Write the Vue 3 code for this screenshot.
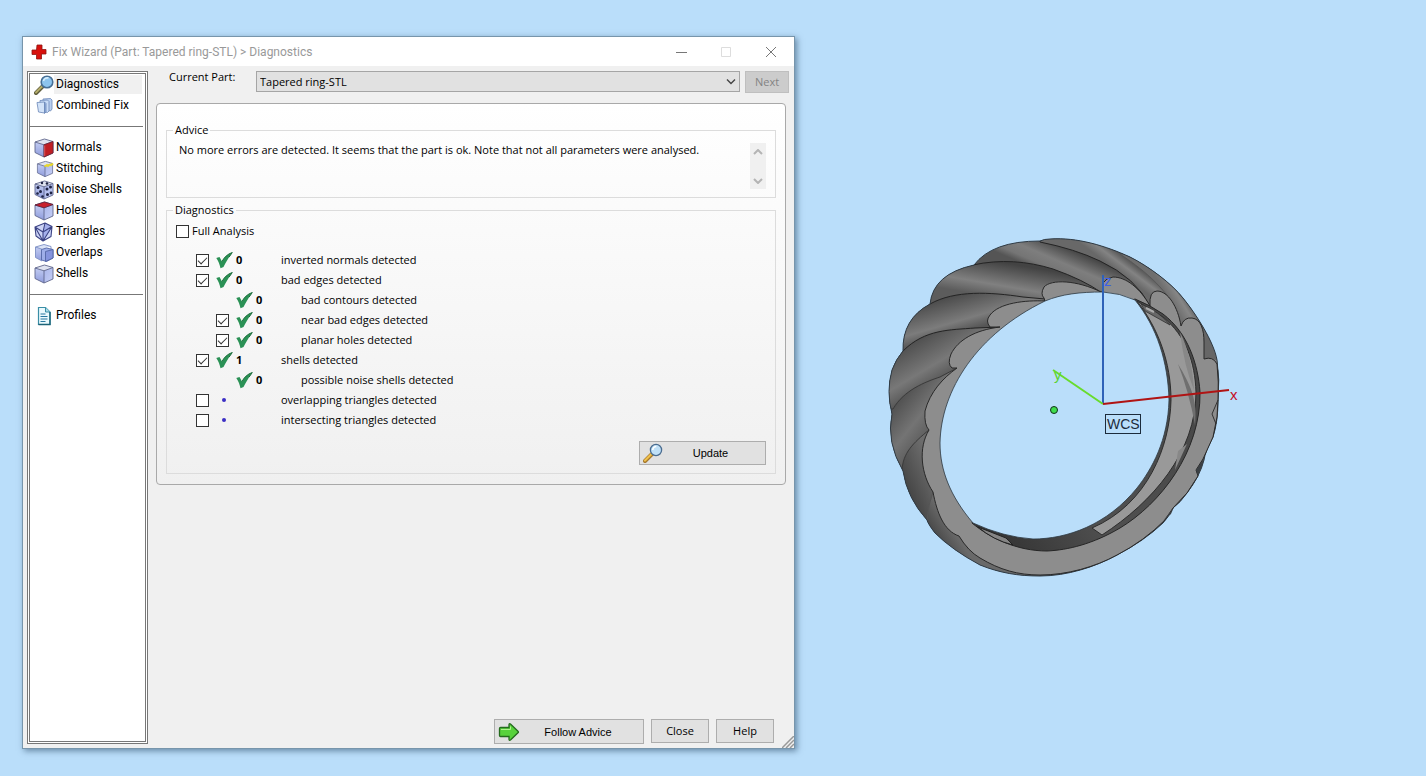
<script setup>
import { ref } from 'vue'

const groups = [
  [
    { name: 'Diagnostics', icon: 'lens' },
    { name: 'Combined Fix', icon: 'stack' }
  ],
  [
    { name: 'Normals', icon: 'normals' },
    { name: 'Stitching', icon: 'stitching' },
    { name: 'Noise Shells', icon: 'noise' },
    { name: 'Holes', icon: 'holes' },
    { name: 'Triangles', icon: 'triangles' },
    { name: 'Overlaps', icon: 'overlaps' },
    { name: 'Shells', icon: 'cube' }
  ],
  [{ name: 'Profiles', icon: 'page' }]
]
const active = ref('Diagnostics')
const full = ref(false)

const checks = ref([
  { text: 'inverted normals detected', count: 0, box: true, on: true, ok: true },
  { text: 'bad edges detected', count: 0, box: true, on: true, ok: true },
  { text: 'bad contours detected', count: 0, box: false, ok: true, nested: true },
  { text: 'near bad edges detected', count: 0, box: true, on: true, ok: true, nested: true },
  { text: 'planar holes detected', count: 0, box: true, on: true, ok: true, nested: true },
  { text: 'shells detected', count: 1, box: true, on: true, ok: true },
  { text: 'possible noise shells detected', count: 0, box: false, ok: true, nested: true },
  { text: 'overlapping triangles detected', box: true, on: false },
  { text: 'intersecting triangles detected', box: true, on: false }
])
</script>

<template>
  <div class="desktop">
    <svg class="defs" aria-hidden="true">
      <defs>
        <linearGradient id="faceL" x1="0" y1="0" x2="0" y2="1">
          <stop offset="0" stop-color="#c3cdf2" /><stop offset="1" stop-color="#8e9bdc" />
        </linearGradient>
        <linearGradient id="faceR" x1="0" y1="0" x2="1" y2="1">
          <stop offset="0" stop-color="#a9b5ea" /><stop offset="1" stop-color="#c6cff5" />
        </linearGradient>
        <symbol id="lens" viewBox="0 0 20 20">
          <path d="M2 18 9 11" stroke="#5d5b3a" stroke-width="4" stroke-linecap="round" />
          <path d="M2 17.5 8 11.5" stroke="#b5ad6a" stroke-width="2" stroke-linecap="round" />
          <circle cx="13" cy="7" r="5.8" fill="#8cc4ee" stroke="#476f95" stroke-width="1.6" />
          <path d="M9.5 6a4 4 0 0 1 5-3" fill="none" stroke="#d8eefc" stroke-width="1.6" />
        </symbol>
        <symbol id="lens-gold" viewBox="0 0 20 20">
          <path d="M2 18 9 11" stroke="#a5772a" stroke-width="4" stroke-linecap="round" />
          <path d="M2 17.5 8 11.5" stroke="#efc04c" stroke-width="2.2" stroke-linecap="round" />
          <circle cx="13" cy="7" r="5.6" fill="#bfe0f7" stroke="#4a6c90" stroke-width="1.3" />
          <path d="M9.8 7a3.5 3.5 0 0 1 3.5-3.5" fill="none" stroke="#fff" stroke-width="1.6" />
        </symbol>
        <symbol id="stack" viewBox="0 0 20 20">
          <g stroke="#6c88b8" stroke-width=".8" stroke-linejoin="round">
            <path d="M9 3 16.500 2.500 18 4v9l-1.500 2L9 13z" fill="#b9cff0" />
            <path d="M6 4.500 13.500 4 15 5.500v9.500l-1.500 1.500L6 15z" fill="#c8dbf6" />
            <path d="M3 6.500 10.500 6v11L4.500 16z" fill="#d3e3f8" />
            <path d="M10.500 6 12 7.500V16l-1.500 1.500z" fill="#96b2e0" />
          </g>
        </symbol>
        <symbol id="cube" viewBox="0 0 20 20">
          <path d="M1 4 10.500 1 19 3.500 10 6.800z" fill="#dfe3f0" />
          <path d="M1 4 10 6.800V19L1 14.500z" fill="url(#faceL)" />
          <path d="M10 6.800 19 3.500V15L10 19z" fill="url(#faceR)" />
          <path d="M1 4 10.500 1 19 3.500V15L10 19 1 14.500zM1 4l9 2.800 9-3.300M10 6.800V19" fill="none" stroke="#60668c" stroke-width=".9" stroke-linejoin="round" />
        </symbol>
        <symbol id="normals" viewBox="0 0 20 20">
          <use href="#cube" />
          <path d="M10 6.800 19 3.500V15L10 19z" fill="#bf1f25" stroke="#6e2233" stroke-width=".8" />
          <path d="M10.700 18V7.500" stroke="#e4666a" stroke-width=".8" />
        </symbol>
        <symbol id="stitching" viewBox="0 0 20 20">
          <svg x="2.500" y="1" width="17" height="18" viewBox="0 0 20 20"><use href="#cube" /></svg>
          <path d="M10.500 7.500 13 6l1 1 2-1.500 1 .8 2-1.800" fill="none" stroke="#e9d92a" stroke-width="2" />
        </symbol>
        <symbol id="noise" viewBox="0 0 20 20">
          <use href="#cube" />
          <g fill="#1e2344">
            <circle cx="4" cy="7.500" r="1.500" /><circle cx="8" cy="3" r="1.200" /><circle cx="13" cy="3.500" r="1.300" />
            <circle cx="6.500" cy="11.500" r="1.500" /><circle cx="3.500" cy="13.500" r="1.300" /><circle cx="13" cy="9" r="1.500" />
            <circle cx="16.500" cy="7" r="1.500" /><circle cx="13.500" cy="14.500" r="1.500" /><circle cx="17" cy="13" r="1.400" />
            <circle cx="8.500" cy="16.500" r="1.300" />
          </g>
        </symbol>
        <symbol id="holes" viewBox="0 0 20 20">
          <use href="#cube" />
          <path d="M1 4 10.500 1 19 3.500 10 6.800z" fill="#c8202c" stroke="#5e2038" stroke-width=".8" />
        </symbol>
        <symbol id="triangles" viewBox="0 0 20 20">
          <path d="M1 5 11 1l7 3.500-1 10L9 19l-7-5z" fill="#cdd4f6" />
          <path d="M11 1 9 10v9l9-14.500z" fill="#a5b0ec" />
          <path d="M1 5 11 1l7 3.500-1 10L9 19l-7-5zM1 5l8 5 9-5.500M9 10v9M1 5l8 14 9-14.500M11 1 9 10" fill="none" stroke="#3c4384" stroke-width="1.100" stroke-linejoin="round" />
        </symbol>
        <symbol id="overlaps" viewBox="0 0 20 20">
          <path d="M1.500 4 10 1.500 17 3.500 9 6z" fill="#dbe3f7" />
          <path d="M1.500 4 8 6v12l-6.500-3.500z" fill="url(#faceL)" />
          <path d="M8 18 1.500 14.500V4L10 1.500 17 3.500V6M1.500 4 8 6.200" fill="none" stroke="#7d90c4" stroke-width=".9" />
          <path d="M7.500 6.500 12.500 5l6.500 1.500V15l-6.500 3.500-5-1.500z" fill="#9eaee8" stroke="#5366a6" stroke-width=".9" />
          <path d="M11.500 8.500v10L19 15V6.500z" fill="#8594dd" stroke="#5366a6" stroke-width=".9" />
        </symbol>
        <symbol id="page" viewBox="0 0 20 20">
          <path d="M4.500 1.500h7l4.500 4.500v12.500H4.500z" fill="#e9f9fd" stroke="#3a8ea6" stroke-width="1.200" />
          <path d="M11.500 1.500V6H16" fill="#a8dbe8" stroke="#3a8ea6" />
          <path d="M6.500 8h5M6.500 10.500h7M6.500 13h7M6.500 15.500h5" stroke="#2878a0" stroke-width="1.200" />
          <path d="M4.500 18.500H16V6" fill="none" stroke="#1c6478" stroke-width="1.400" />
        </symbol>
        <symbol id="tick" viewBox="0 0 17 17">
          <path d="M.3 6 3.500 5 6 9.500C8 5.500 11.500 2 16.300.5 13 5 9.500 11 7.500 15L4.500 16.300C3.800 13 2.500 9 .3 6z" fill="#2a9155" />
          <path d="M6 9.500C8 5.500 11.500 2 16.300.5L13 5.200" fill="none" stroke="#1d6e3b" stroke-width="1" />
        </symbol>
      </defs>
    </svg>

    <section class="dialog" aria-label="Fix Wizard">
      <header class="titlebar">
        <svg class="cross" viewBox="0 0 16 16" aria-hidden="true">
          <path d="M6 1h5v4.500h4V10h-4.500v5H5.500v-4.500H1V6h4.500z" fill="#d8100c" stroke="#8f1510" stroke-width=".8" />
        </svg>
        <h1>Fix Wizard (Part: Tapered ring-STL) &gt; Diagnostics</h1>
        <div class="caption">
          <button type="button" aria-label="Minimize"><svg viewBox="0 0 12 12"><path d="M1 6.500h11" /></svg></button>
          <button type="button" aria-label="Maximize" disabled><svg viewBox="0 0 12 12"><path d="M1.500 1.500h9v9h-9z" /></svg></button>
          <button type="button" aria-label="Close window"><svg viewBox="0 0 12 12"><path d="M1 1l10 10M11 1 1 11" /></svg></button>
        </div>
      </header>

      <div class="body">
        <nav class="sidebar">
          <ul v-for="(group, i) in groups" :key="i">
            <li v-for="item in group" :key="item.name">
              <button type="button" class="item" :class="{ active: item.name === active }" @click="active = item.name">
                <svg aria-hidden="true"><use :href="'#' + item.icon" /></svg>
                <span>{{ item.name }}</span>
              </button>
            </li>
          </ul>
        </nav>

        <main class="content">
          <div class="part">
            <label for="part">Current Part:</label>
            <div class="combo">
              <select id="part"><option>Tapered ring-STL</option></select>
              <svg viewBox="0 0 10 6" aria-hidden="true"><path d="M1 .5l4 4 4-4" /></svg>
            </div>
            <button type="button" class="btn next" disabled>Next</button>
          </div>

          <div class="panel">
            <fieldset class="advice">
              <legend>Advice</legend>
              <p>No more errors are detected. It seems that the part is ok. Note that not all parameters were analysed.</p>
              <div class="scroll">
                <button type="button" aria-label="Scroll up"><svg viewBox="0 0 10 6"><path d="M1 5l4-4 4 4" /></svg></button>
                <button type="button" aria-label="Scroll down"><svg viewBox="0 0 10 6"><path d="M1 1l4 4 4-4" /></svg></button>
              </div>
            </fieldset>

            <fieldset class="diag">
              <legend>Diagnostics</legend>
              <div class="inner">
                <label class="full"><input v-model="full" type="checkbox" />Full Analysis</label>
                <ul class="checks">
                  <li v-for="(c, i) in checks" :key="i" :class="{ nested: c.nested }">
                    <span><input v-if="c.box" :id="'check' + i" v-model="c.on" type="checkbox" /></span>
                    <svg v-if="c.ok" class="tick" aria-hidden="true"><use href="#tick" /></svg>
                    <i v-else class="dot"></i>
                    <b>{{ c.count }}</b>
                    <label v-if="c.box" :for="'check' + i">{{ c.text }}</label>
                    <span v-else>{{ c.text }}</span>
                  </li>
                </ul>
                <div class="update">
                  <button type="button" class="btn wide"><svg aria-hidden="true"><use href="#lens-gold" /></svg><span>Update</span></button>
                </div>
              </div>
            </fieldset>
          </div>

          <footer>
            <button type="button" class="btn wide follow">
              <svg viewBox="0 0 22 20" aria-hidden="true">
                <path d="M1.500 6.500q0-1 1-1H11V2.800Q11 1 12.500 2L20 9.200q.8.800 0 1.600L12.500 18Q11 19 11 17.200V14.500H2.500q-1 0-1-1z" fill="#58d23c" stroke="#246b1d" stroke-width="1.300" />
                <path d="M3 7.500h9.500V4.500" fill="none" stroke="#b1f08f" />
              </svg>
              <span>Follow Advice</span>
            </button>
            <button type="button" class="btn">Close</button>
            <button type="button" class="btn">Help</button>
          </footer>
          <svg class="grip" viewBox="0 0 12 12" aria-hidden="true"><path d="M0 12 12 0M4 12l8-8M8 12l4-4" /></svg>
        </main>
      </div>
    </section>

    <svg class="scene" viewBox="795 0 631 776" role="img" aria-label="Tapered ring model">
      <defs>
        <clipPath id="sil">
          <path d="M1050 239C1077 237 1106 246 1130 257C1150 267 1172 284 1183 298C1196 314 1214 342 1217 360Q1220 380 1218 400Q1218 422 1213 437Q1205 452 1204 460Q1200 476 1187 493Q1180 503 1173 508Q1168 518 1163 523Q1144 541 1117 555C1095 567 1067 576 1040 576C1018 576 1000 573 980 565Q952 550 935 533Q928 524 927 520Q907 498 903 471Q886 442 892 414Q886 391 892 370Q896 359 903 351Q902 319 930 304Q933 274 974 265Q992 241 1040 241Q1044 239 1050 239z" />
        </clipPath>
        <linearGradient id="g0" gradientUnits="userSpaceOnUse" x1="1065" y1="246" x2="1052" y2="276">
          <stop offset="0" stop-color="#444" /><stop offset=".5" stop-color="#7e7e7e" /><stop offset=".8" stop-color="#757575" /><stop offset="1" stop-color="#555" />
        </linearGradient>
        <linearGradient id="g1" gradientUnits="userSpaceOnUse" x1="1000" y1="262" x2="994" y2="297">
          <stop offset="0" stop-color="#434343" /><stop offset=".65" stop-color="#808080" /><stop offset="1" stop-color="#5c5c5c" />
        </linearGradient>
        <linearGradient id="g2" gradientUnits="userSpaceOnUse" x1="952" y1="294" x2="963" y2="332">
          <stop offset="0" stop-color="#484848" /><stop offset=".7" stop-color="#7c7c7c" /><stop offset="1" stop-color="#555" />
        </linearGradient>
        <linearGradient id="g3" gradientUnits="userSpaceOnUse" x1="912" y1="336" x2="938" y2="380">
          <stop offset="0" stop-color="#484848" /><stop offset=".7" stop-color="#787878" /><stop offset="1" stop-color="#5a5a5a" />
        </linearGradient>
        <linearGradient id="g4" gradientUnits="userSpaceOnUse" x1="890" y1="400" x2="927" y2="430">
          <stop offset="0" stop-color="#484848" /><stop offset=".7" stop-color="#747474" /><stop offset="1" stop-color="#626262" />
        </linearGradient>
        <linearGradient id="g5" gradientUnits="userSpaceOnUse" x1="898" y1="480" x2="932" y2="465">
          <stop offset="0" stop-color="#404040" /><stop offset="1" stop-color="#6c6c6c" />
        </linearGradient>
        <linearGradient id="g6" gradientUnits="userSpaceOnUse" x1="930" y1="538" x2="950" y2="525">
          <stop offset="0" stop-color="#3f3f3f" /><stop offset="1" stop-color="#696969" />
        </linearGradient>
        <linearGradient id="gs" gradientUnits="userSpaceOnUse" x1="1116" y1="270" x2="1128" y2="254">
          <stop offset="0" stop-color="#686868" /><stop offset=".4" stop-color="#838383" /><stop offset="1" stop-color="#3e3e3e" />
        </linearGradient>
        <linearGradient id="gt" gradientUnits="userSpaceOnUse" x1="1172" y1="304" x2="1190" y2="293">
          <stop offset="0" stop-color="#6e6e6e" /><stop offset=".45" stop-color="#868686" /><stop offset="1" stop-color="#444" />
        </linearGradient>
        <linearGradient id="gin" gradientUnits="userSpaceOnUse" x1="1000" y1="540" x2="1180" y2="400">
          <stop offset="0" stop-color="#353535" /><stop offset=".4" stop-color="#505050" /><stop offset="1" stop-color="#484848" />
        </linearGradient>
      </defs>

      <g clip-path="url(#sil)" stroke="#242424" stroke-width="1">
        <rect x="880" y="230" width="345" height="350" fill="url(#g0)" stroke="none" />
        <path d="M1040 242Q1075 249 1100 261Q1136 278 1150 306V400H1230V230H1040z" fill="url(#gs)" />
        <path d="M1120 254Q1147 272 1160 287Q1176 303 1181 326L1204 359 1230 380V250z" fill="url(#gt)" stroke="#585858" />
        <path d="M1198 322C1206 328 1213 345 1217 360L1204 359z" fill="#666" stroke="none" />
        <path d="M973 265C1000 259 1027 261 1053 269Q1084 280 1102 293L1060 320 880 420V265z" fill="url(#g1)" />
        <path d="M930 304C955 290 990 292 1023 297L1045 299 1000 400 880 420V310z" fill="url(#g2)" />
        <path d="M903 351C925 329 950 330 975 328L1000 327 960 420 880 430V351z" fill="url(#g3)" />
        <path d="M893 409C904 390 925 382 940 377L957 368 960 500 880 500V409z" fill="url(#g4)" stroke="#3a3a3a" />
        <path d="M902 470C903 453 913 443 929 430L960 530 920 560 890 520z" fill="url(#g5)" stroke="#3a3a3a" />
        <path d="M927 520Q928 505 933 492L975 550 1040 572V590H930z" fill="url(#g6)" stroke="#555" />
      </g>
      <path d="M1050 239C1077 237 1106 246 1130 257C1150 267 1172 284 1183 298C1196 314 1214 342 1217 360Q1220 380 1218 400Q1218 422 1213 437Q1205 452 1204 460Q1200 476 1187 493Q1180 503 1173 508Q1168 518 1163 523Q1144 541 1117 555C1095 567 1067 576 1040 576C1018 576 1000 573 980 565Q952 550 935 533Q928 524 927 520Q907 498 903 471Q886 442 892 414Q886 391 892 370Q896 359 903 351Q902 319 930 304Q933 274 974 265Q992 241 1040 241Q1044 239 1050 239z" fill="none" stroke="#2f3b45" />

      <path d="M1103 292V283Q1106 278 1113 277C1126 277 1140 288 1150 306Q1149 291 1157 291C1168 291 1178 307 1181 326Q1184 317 1192 318C1201 319 1204 330 1204 342V359Q1213 356 1217 364Q1219 382 1218 400L1217 417 1213 437 1203 459 1196 470 1198 476 1187 493 1173 508 1165 520Q1144 541 1117 555C1095 567 1067 575 1040 575C1018 575 1000 570 980 558Q968 551 959 536C944 531 937 513 933 492C921 474 918 448 929 430Q924 425 925 411C930 392 943 378 957 368H952Q947 364 951 354C958 340 975 330 1000 327H990Q985 321 990 315C999 303 1025 300 1045 301L1044 298Q1040 294 1044 287C1051 279 1077 280 1101 292z" fill="#8d8d8d" stroke="#292929" />
      <path d="M1218 400 1212 414 1216 424" fill="none" stroke="#333" />
      <path d="M1204 459 1196 470 1198 476 1189 490Q1200 476 1204 459zM1174 507 1163 521 1171 514z" fill="#3b4044" />

      <path d="M1135 299Q1150 305 1163 314C1188 333 1198 364 1200 392C1201 452 1160 504 1120 528C1093 544 1068 550 1047 551C1017 551 990 538 972 523L1000 440 1110 310z" fill="url(#gin)" stroke="#262626" />
      <path d="M1137 301Q1149 309 1163 317C1186 336 1195 362 1196 392C1196 452 1153 502 1102 535L1092 528C1148 504 1170 446 1171 400C1171 362 1158 328 1137 301z" fill="#999" stroke="#2d2d2d" />
      <path d="M1178 364C1190 384 1198 400 1195 425Q1189 392 1178 364z" fill="#6f6f6f" />
      <path d="M1180 332C1189 350 1193 370 1194 390Q1184 366 1180 332zM1178 451 1175 470 1187 444z" fill="#888" />
      <path d="M1141 304Q1160 312 1170 325L1145 311z" fill="#686868" stroke="#303030" stroke-width=".8" />
      <path d="M1146 308 1154 312" stroke="#aaa" stroke-width="2" />
      <path d="M978 527 1006 538 1013 545Q993 540 978 527z" fill="#858585" stroke="#222" />

      <path class="hole" d="M1045 301C1062 294 1080 292 1103 292Q1120 293 1135 300C1157 327 1168 362 1169 400C1168 440 1152 469 1137 488C1107 525 1067 539 1033 539Q1003 537 973 523C950 496 940 470 940 443C941 390 977 334 1045 301z" stroke="#2c3740" stroke-width=".8" />

      <g fill="none" stroke-width="2">
        <path d="M1103 404V275" stroke="#2f62b8" />
        <path d="M1103 404 1053 370" stroke="#68dc2c" />
        <path d="M1103 404 1229 390" stroke="#b01414" />
      </g>
      <circle cx="1054" cy="410" r="3.500" fill="#3edc4c" stroke="#12301a" />
      <rect x="1105.500" y="414.500" width="35" height="19" fill="none" stroke="#1c2b3b" />
      <g class="marks">
        <text x="1104" y="286" fill="#3c5fe8">z</text>
        <text x="1054" y="380" fill="#5cd22e">y</text>
        <text x="1230" y="400" fill="#c40c24">x</text>
        <text class="wcs" x="1107" y="429" fill="#1c2b3b">WCS</text>
      </g>
    </svg>
  </div>
</template>

<style>
body { background: #badefa; }
</style>

<style scoped>
* { box-sizing: border-box; }
.desktop {
  display: grid;
  grid-template-columns: 795fr 631fr;
  min-height: 100vh;
  background: #badefa;
  color: #000;
  font: 11px/16px "Open Sans", "Noto Sans", sans-serif;
}
.defs { position: absolute; width: 0; height: 0; }
button, select { font: inherit; color: inherit; }
ul { list-style: none; margin: 0; padding: 0; }

.dialog {
  display: flex;
  flex-direction: column;
  margin: 36px 0 27px 22px;
  border: 1px solid #7795ab;
  background: #f0f0f0;
  box-shadow: 2px 2px 6px rgba(20, 50, 80, .5);
}
.titlebar {
  display: flex;
  align-items: center;
  height: 29px;
  padding-left: 8px;
  background: #fff;
}
.cross { width: 16px; height: 16px; }
h1 { flex: 1; margin: 0 0 0 5px; font: 12px/16px Roboto, sans-serif; color: #999; }
.caption { display: flex; margin-right: 1px; }
.caption button { width: 45px; height: 29px; padding: 0; border: 0; background: none; }
.caption svg { display: block; width: 12px; height: 12px; margin: 0 auto; fill: none; stroke: #777; }
.caption button:disabled svg { stroke: #ddd; }

.body { display: flex; flex: 1; }
.sidebar {
  flex: none;
  width: 121px;
  margin: 5px 0 4px 4px;
  border: 3px double #777;
  background: #fff;
  font: 12px/16px Roboto, sans-serif;
}
.sidebar ul + ul::before {
  content: "";
  display: block;
  height: 1px;
  margin: 10px 2px 10px 0;
  background: #777;
}
.item {
  display: flex;
  align-items: center;
  width: 100%;
  height: 21px;
  padding: 0 3px 0 4px;
  border: 0;
  background: none;
  white-space: nowrap;
}
.item svg { flex: none; width: 20px; height: 20px; }
.item span { flex: 1; padding: 0 2px; text-align: left; line-height: 19px; }
.item.active span { background: #f0f0f0; }

.content { position: relative; display: flex; flex: 1; flex-direction: column; min-width: 0; padding: 5px 5px 4px 8px; }
.part { display: flex; height: 22px; }
.part label { width: 100px; padding-left: 13px; line-height: 12px; }
.combo { position: relative; flex: 1; }
.combo select {
  width: 100%;
  height: 21px;
  padding: 0 0 0 3px;
  border: 1px solid #a5a5a5;
  border-radius: 0;
  appearance: none;
  background: #e1e1e1;
}
.combo svg { position: absolute; right: 4px; top: 8px; width: 10px; height: 6px; fill: none; stroke: #444; stroke-width: 1.4; }
.btn {
  height: 24px;
  padding: 0;
  border: 1px solid #adadad;
  background: #e1e1e1;
}
.next { width: 44px; height: 22px; margin-left: 5px; }
.next:disabled { border-color: #bfbfbf; background: #ccc; color: #838383; }

.panel {
  margin: 10px 3px 0 0;
  padding: 18px 9px 10px;
  border: 1px solid #a9a9a9;
  border-radius: 4px;
  background: linear-gradient(#fff, #f0f0f0);
}
fieldset { min-width: 0; margin: 0; padding: 0; border: 1px solid #dcdcdc; }
legend { margin-left: 6px; padding: 0 2px; }
.advice { display: flex; height: 76px; }
.advice p { flex: 1; margin: 4px 0 0 12px; }
.scroll {
  display: flex;
  flex-direction: column;
  justify-content: space-between;
  width: 16px;
  height: 46px;
  margin: 5px 9px 0 0;
  background: #f0f0f0;
}
.scroll button { height: 17px; padding: 0; border: 0; background: none; }
.scroll svg { display: block; width: 10px; height: 6px; margin: 0 auto; fill: none; stroke: #b4b4b4; stroke-width: 2; }

.diag { margin-top: 4px; }
.inner { padding: 5px 9px 8px; }
.full { display: flex; align-items: center; gap: 3px; }
input[type="checkbox"] {
  display: block;
  flex: none;
  width: 13px;
  height: 13px;
  margin: 0;
  border: 1px solid #333;
  appearance: none;
  background: #fff;
}
input[type="checkbox"]:checked::after {
  content: "";
  display: block;
  width: 8px;
  height: 4px;
  margin: 2px 1px;
  border: solid #333;
  border-width: 0 0 1px 1px;
  transform: rotate(-45deg);
}
.checks { margin: 11px 0 0 20px; }
.checks li { display: grid; grid-template-columns: 20px 20px 45px 1fr; align-items: center; height: 20px; }
.checks .nested { padding-left: 20px; }
.tick { width: 17px; height: 17px; }
.dot { width: 4px; height: 4px; margin-left: 6px; border-radius: 50%; background: #3b2fc4; }
.update { display: flex; justify-content: flex-end; margin-top: 11px; }
.wide {
  display: flex;
  align-items: center;
  width: 127px;
  padding: 0 3px;
  font: 11px/16px "Liberation Sans", Arial, sans-serif;
}
.wide svg { width: 20px; height: 20px; }
.wide span { flex: 1; padding-right: 4px; }

footer { display: flex; gap: 7px; justify-content: flex-end; margin-top: auto; padding-right: 15px; }
footer .btn { width: 58px; }
footer .follow { width: 150px; height: 25px; }
.follow svg { width: 22px; }
.grip { position: absolute; right: 0; bottom: 0; width: 12px; height: 12px; stroke: #999; stroke-width: 1.5; }

.scene { width: 100%; height: 100%; }
.hole { fill: #badefa; }
.marks { font: 15px "Liberation Sans", Arial, sans-serif; }
.wcs { font-size: 14px; }
</style>
